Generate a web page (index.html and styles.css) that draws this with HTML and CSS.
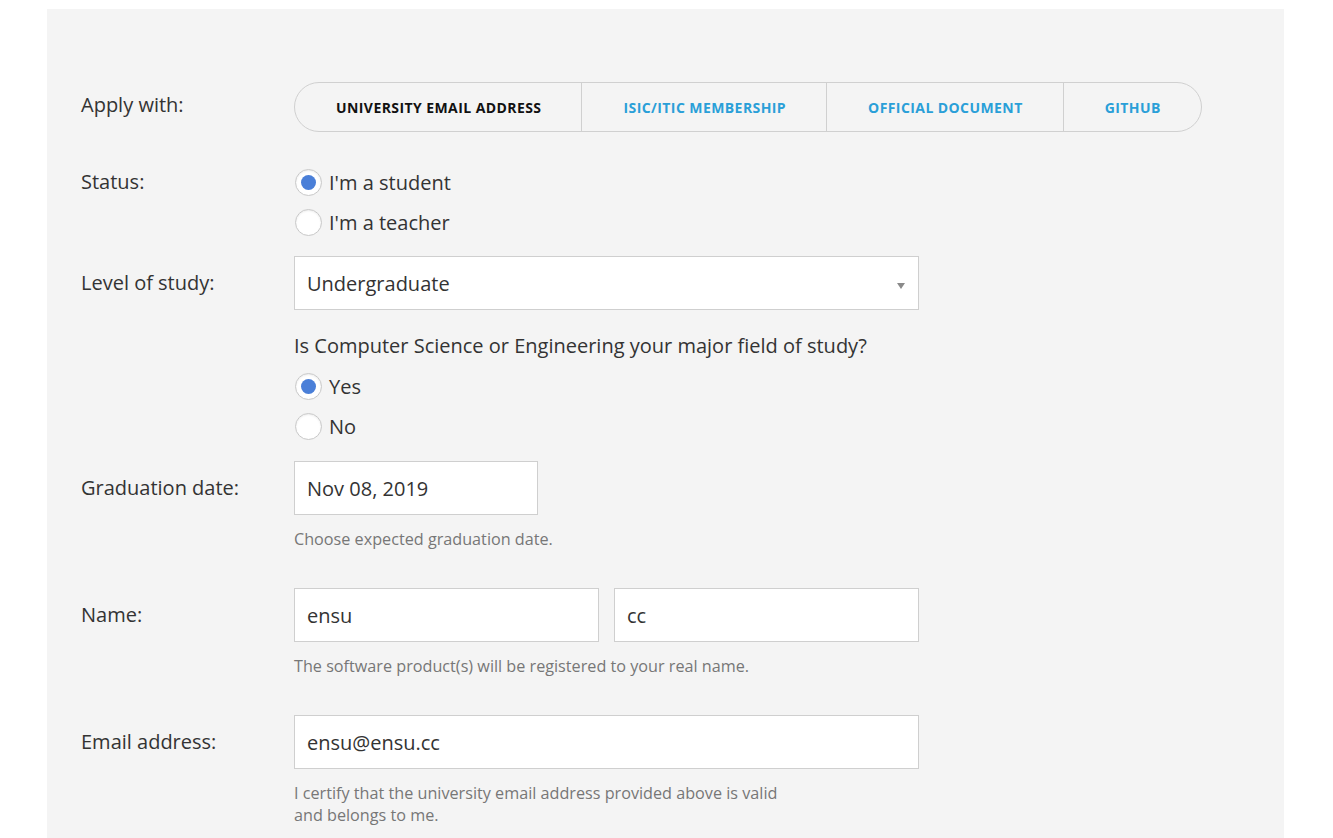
FILE: index.html
```html
<!DOCTYPE html>
<html lang="en">
<head>
<meta charset="utf-8">
<title>Apply</title>
<link rel="stylesheet" href="styles.css">
</head>
<body>
<div class="panel">
  <form class="form">
    <div class="row row-tabs">
      <div class="label">Apply with:</div>
      <div class="field">
        <div class="tabs">
          <div class="tab active">University email address</div>
          <div class="tab">ISIC/ITIC membership</div>
          <div class="tab">Official document</div>
          <div class="tab">GitHub</div>
        </div>
      </div>
    </div>

    <div class="row row-status">
      <div class="label label-radio">Status:</div>
      <div class="field">
        <label class="radio"><span class="dot checked"></span>I'm a student</label>
        <label class="radio"><span class="dot"></span>I'm a teacher</label>
      </div>
    </div>

    <div class="row row-level">
      <div class="label label-input">Level of study:</div>
      <div class="field">
        <div class="input select wide">Undergraduate<span class="caret"></span></div>
        <div class="question">Is Computer Science or Engineering your major field of study?</div>
        <label class="radio"><span class="dot checked"></span>Yes</label>
        <label class="radio"><span class="dot"></span>No</label>
      </div>
    </div>

    <div class="row row-grad">
      <div class="label label-input">Graduation date:</div>
      <div class="field">
        <div class="input date">Nov 08, 2019</div>
        <div class="help">Choose expected graduation date.</div>
      </div>
    </div>

    <div class="row row-name">
      <div class="label label-input">Name:</div>
      <div class="field">
        <div class="pair">
          <div class="input half">ensu</div>
          <div class="input half">cc</div>
        </div>
        <div class="help">The software product(s) will be registered to your real name.</div>
      </div>
    </div>

    <div class="row row-email">
      <div class="label label-input">Email address:</div>
      <div class="field">
        <div class="input wide">ensu@ensu.cc</div>
        <div class="help narrow">I certify that the university email address provided above is valid and belongs to me.</div>
      </div>
    </div>
  </form>
</div>
</body>
</html>
```

FILE: styles.css
```css
html, body {
  margin: 0;
  padding: 0;
  background: #ffffff;
}

body {
  font-family: "Open Sans", "Liberation Sans", sans-serif;
  color: #333333;
  height: 838px;
  overflow: hidden;
}

.panel {
  margin: 9px 0 0 47px;
  width: 1237px;
  min-height: 900px;
  background: #f4f4f4;
  padding: 73px 0 0 34px;
  box-sizing: border-box;
}

.row {
  display: flex;
  align-items: flex-start;
}

.label {
  width: 213px;
  flex: none;
  font-size: 20px;
  line-height: 26px;
  color: #333;
}

.field {
  display: flex;
  flex-direction: column;
  align-items: flex-start;
}

/* tabs */
.row-tabs .label {
  padding-top: 10px;
}

.tabs {
  display: flex;
  height: 50px;
  border: 1px solid #d0d0d0;
  border-radius: 26px;
  box-sizing: border-box;
  overflow: hidden;
}

.tab {
  display: flex;
  align-items: center;
  justify-content: center;
  padding: 0 40px 0 41px;
  font-size: 14px;
  letter-spacing: 0.42px;
  font-weight: 700;
  text-transform: uppercase;
  color: #2a9fd8;
  border-left: 1px solid #d0d0d0;
  white-space: nowrap;
}

.tab:first-child {
  border-left: none;
}

.tab.active {
  color: #111;
}

/* status */
.row-status {
  margin-top: 30px;
}

.label-radio {
  padding-top: 7px;
}

.radio {
  display: flex;
  align-items: center;
  height: 40px;
  font-size: 20px;
  color: #333;
}

.dot {
  width: 27px;
  height: 27px;
  margin: 0 7px 0 1px;
  border-radius: 50%;
  border: 1px solid #c8c8c8;
  background: #fff;
  box-sizing: border-box;
  box-shadow: inset 0 1px 2px rgba(0, 0, 0, 0.08);
  position: relative;
}

.dot.checked::after {
  content: "";
  position: absolute;
  left: 5px;
  top: 5px;
  width: 15px;
  height: 15px;
  border-radius: 50%;
  background: #4a7fd8;
}

/* inputs */
.row-level {
  margin-top: 14px;
}

.label-input {
  padding-top: 14px;
}

.input {
  height: 54px;
  box-sizing: border-box;
  border: 1px solid #cfcfcf;
  background: #fff;
  padding: 0 12px;
  display: flex;
  align-items: center;
  font-size: 20px;
  color: #333;
}

.wide {
  width: 625px;
}

.select {
  position: relative;
}

.caret {
  position: absolute;
  right: 13px;
  top: 26px;
  width: 0;
  height: 0;
  border-left: 4px solid transparent;
  border-right: 4px solid transparent;
  border-top: 6px solid #8a8a8a;
}

.question {
  margin-top: 16px;
  height: 40px;
  line-height: 40px;
  font-size: 20px;
  color: #333;
}

.row-grad {
  margin-top: 15px;
}

.date {
  width: 244px;
}

.help {
  margin-top: 13px;
  font-size: 16.2px;
  line-height: 22px;
  color: #777;
}

.help.narrow {
  width: 495px;
}

.row-name {
  margin-top: 38px;
}

.row-email {
  margin-top: 38px;
}

.pair {
  display: flex;
  gap: 15px;
}

.half {
  width: 305px;
}
```
